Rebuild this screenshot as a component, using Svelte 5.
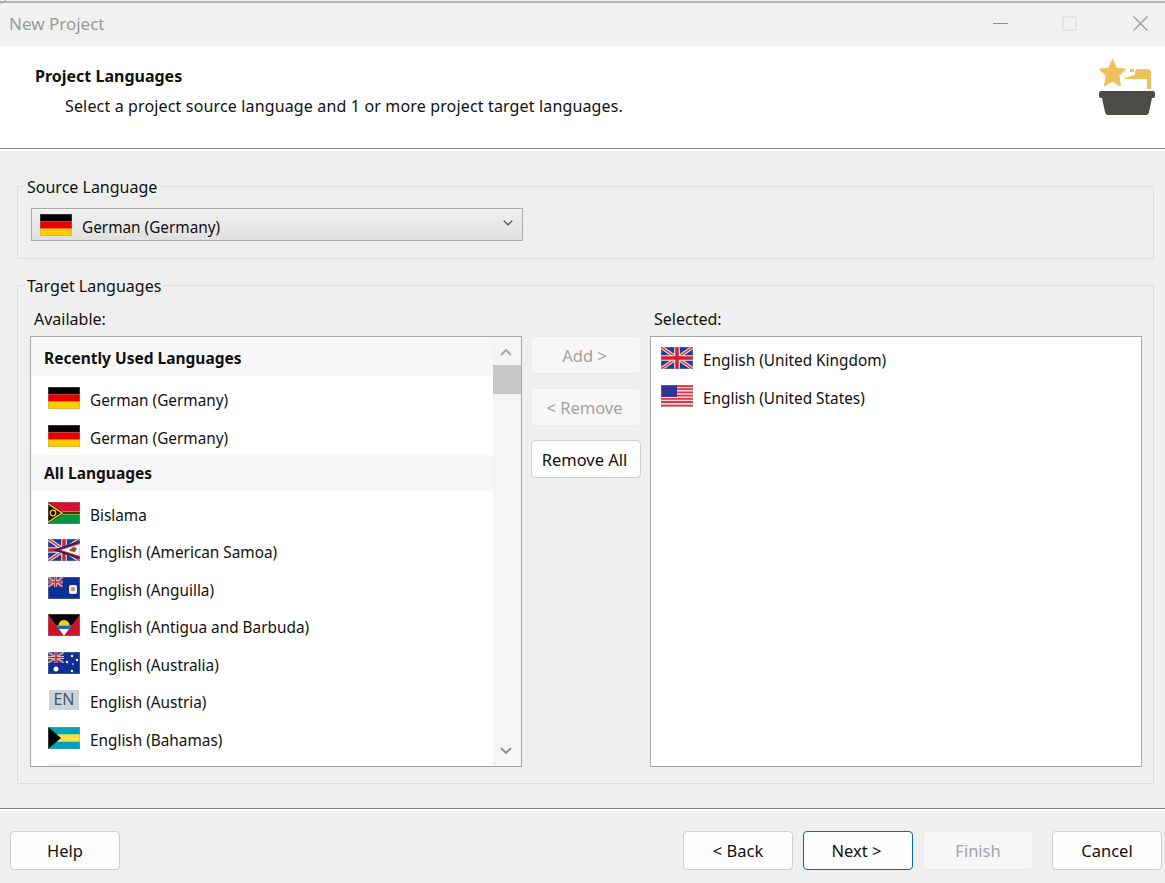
<script lang="ts">
    const recent = [
        { flag: 'de', name: 'German (Germany)' },
        { flag: 'de', name: 'German (Germany)' }
    ];
    const all = [
        { flag: 'vu', name: 'Bislama' },
        { flag: 'as', name: 'English (American Samoa)' },
        { flag: 'ai', name: 'English (Anguilla)' },
        { flag: 'ag', name: 'English (Antigua and Barbuda)' },
        { flag: 'au', name: 'English (Australia)' },
        { flag: 'en', name: 'English (Austria)' },
        { flag: 'bs', name: 'English (Bahamas)' },
        { flag: 'blank', name: '' }
    ];
    const selected = [
        { flag: 'gb', name: 'English (United Kingdom)' },
        { flag: 'us', name: 'English (United States)' }
    ];
</script>

{#snippet union(w: number, h: number)}
    <svg x="0" y="0" width={w} height={h} viewBox="0 0 32 22" preserveAspectRatio="none">
        <rect width="32" height="22" fill="#1c3f94" />
        <path d="M0 0 32 22M32 0 0 22" stroke="#f3d5d8" stroke-width="3.6" />
        <path d="M0 0 32 22M32 0 0 22" stroke="#cf3040" stroke-width="1.4" />
        <path d="M16 0V22M0 11H32" stroke="#f5e6e6" stroke-width="5.6" />
        <path d="M16 0V22M0 11H32" stroke="#d3202c" stroke-width="3.4" />
    </svg>
{/snippet}

{#snippet flagIcon(code: string)}
    {#if code === 'en'}
        <span class="flag en">EN</span>
    {:else}
        <svg class="flag" viewBox="0 0 32 22" width="32" height="22">
            {#if code === 'de'}
                <rect width="32" height="7.4" fill="#000" />
                <rect y="7.4" width="32" height="7.3" fill="#e60000" />
                <rect y="14.7" width="32" height="7.3" fill="#ffcc00" />
            {:else if code === 'vu'}
                <rect width="32" height="11" fill="#d21034" />
                <rect y="11" width="32" height="11" fill="#009543" />
                <path d="M10 11H32" stroke="#fdce12" stroke-width="3" />
                <path d="M10 11H32" stroke="#111" stroke-width="1.600" />
                <path d="M0 0 16 11 0 22Z" fill="#111" />
                <path d="M0 1.500 14 11 0 20.500" fill="none" stroke="#fdce12" stroke-width="1.500" />
                <circle cx="5" cy="11" r="2.800" fill="none" stroke="#fdce12" stroke-width="1.300" />
            {:else if code === 'as'}
                {@render union(32, 22)}
                <path d="M32 1.500 5 11 32 20.500Z" fill="#14266e" />
                <path d="M32 3.500 10 11 32 18.500Z" fill="#d3202c" />
                <path d="M32 5 13 11 32 17Z" fill="#fff" />
                <path d="M21 11 26 7.500 29 9.500 27 13 23 12.500Z" fill="#8a5a2b" />
            {:else if code === 'ai'}
                <rect width="32" height="22" fill="#0c2f96" />
                {@render union(15, 10)}
                <rect x="21" y="8" width="8" height="9" rx="2" fill="#eef0f4" />
                <circle cx="25" cy="12" r="2.200" fill="#e8915a" />
            {:else if code === 'ag'}
                <rect width="32" height="22" fill="#ce1126" />
                <path d="M0 0H32L16 22Z" fill="#000" />
                <path d="M8.400 11.500H23.600L16 22Z" fill="#fff" />
                <path d="M8.400 11.500H23.600L21 15H11Z" fill="#0f6fc6" />
                <path d="M10.500 11.500A5.500 5.500 0 0 1 21.500 11.500Z" fill="#fcd116" />
            {:else if code === 'au'}
                <rect width="32" height="22" fill="#0c2f96" />
                {@render union(16, 11)}
                <circle cx="8" cy="17" r="2.500" fill="#fff" />
                <circle cx="24" cy="4" r="1.200" fill="#fff" />
                <circle cx="19" cy="10" r="1.200" fill="#fff" />
                <circle cx="29" cy="8" r="1.200" fill="#fff" />
                <circle cx="25" cy="12" r=".8" fill="#fff" />
                <circle cx="24" cy="19" r="1.200" fill="#fff" />
            {:else if code === 'bs'}
                <rect width="32" height="22" fill="#00a3bd" />
                <rect y="7.300" width="32" height="7.400" fill="#fae042" />
                <path d="M0 0 13 11 0 22Z" fill="#000" />
            {:else if code === 'gb'}
                {@render union(32, 22)}
            {:else if code === 'us'}
                <rect width="32" height="22" fill="#fbe3e3" />
                <path d="M0 1H32M0 4.200H32M0 7.400H32M0 10.600H32M0 13.800H32M0 17H32M0 20.600H32" stroke="#e6303c" stroke-width="1.800" />
                <rect width="16" height="12" fill="#33339a" />
            {:else}
                <rect width="32" height="22" fill="#eeeeee" />
            {/if}
            {#if code !== 'blank'}
                <rect x=".5" y=".5" width="31" height="21" fill="none" stroke="#999" stroke-opacity=".35" />
            {/if}
        </svg>
    {/if}
{/snippet}

{#snippet langRow(item: { flag: string; name: string })}
    <div class="lang-row">
        {@render flagIcon(item.flag)}
        <span>{item.name}</span>
    </div>
{/snippet}

<div class="window">
    <svg class="corner" width="8" height="4" viewBox="0 0 8 4"><path d="M0 3Q4 3.200 6 0" fill="none" stroke="#9a9a9a" /></svg>
    <div class="titlebar">
        <span class="title">New Project</span>
        <div class="controls">
            <svg width="15" height="15" viewBox="0 0 15 15"><path d="M0 7.500H15" stroke="#8c8c8c" /></svg>
            <svg width="15" height="15" viewBox="0 0 15 15"><rect x=".8" y=".8" width="13.400" height="13.400" rx="1.500" fill="none" stroke="#e0e0e0" stroke-width="1.600" /></svg>
            <svg class="close" width="15" height="15" viewBox="0 0 15 15"><path d="M.5.5 14.500 14.500M14.500.5 .5 14.500" stroke="#999" stroke-width="1.200" /></svg>
        </div>
    </div>

    <header class="banner">
        <div>
            <h1>Project Languages</h1>
            <p>Select a project source language and 1 or more project target languages.</p>
        </div>
        <svg class="logo" width="58" height="58" viewBox="0 0 58 58">
            <path d="M14.500 1.500 18.300 10 27.500 11.300 20.800 17.800 22.500 28 14.500 23.200 6.500 28 8.200 17.800 1.500 11.300 10.700 10Z" fill="#efc15c" stroke="#efc15c" stroke-linejoin="round" />
            <path d="M26 20.500 37 16.500V14Q37 11 40 11H49Q53 11 53 15V31H49V21H26Z" fill="#efc15c" />
            <path d="M32 11H36V14H32Z" fill="#efc15c" />
            <path d="M3 33H55Q57 33 57 35V38Q57 40 55 40H54L51 54Q50.500 57 48 57H10Q7.500 57 7 54L4 40H3Q1 40 1 38V35Q1 33 3 33Z" fill="#4d4b48" />
        </svg>
    </header>

    <main class="content">
        <fieldset class="group source">
            <legend>Source Language</legend>
            <div class="combo">
                {@render flagIcon('de')}
                <span>German (Germany)</span>
                <svg class="chevron" width="10" height="6" viewBox="0 0 10 6"><path d="M.8.8 5 4.800 9.200.8" fill="none" stroke="#555" stroke-width="1.300" /></svg>
            </div>
        </fieldset>

        <fieldset class="group target">
            <legend>Target Languages</legend>
            <div class="columns">
                <div class="col-label">Available:</div>
                <div></div>
                <div class="col-label">Selected:</div>

                <div class="listbox available">
                    <div class="items">
                        <div class="list-head first">Recently Used Languages</div>
                        <div class="rows recent">
                            {#each recent as item}
                                {@render langRow(item)}
                            {/each}
                        </div>
                        <div class="list-head">All Languages</div>
                        <div class="rows">
                            {#each all as item}
                                {@render langRow(item)}
                            {/each}
                        </div>
                    </div>
                    <div class="scrollbar">
                        <svg width="12" height="8" viewBox="0 0 12 8"><path d="M1 7 6 2 11 7" fill="none" stroke="#a6a6a6" stroke-width="1.800" /></svg>
                        <div class="thumb"></div>
                        <div class="track"></div>
                        <svg width="12" height="8" viewBox="0 0 12 8"><path d="M1 1 6 6 11 1" fill="none" stroke="#8c8c8c" stroke-width="1.800" /></svg>
                    </div>
                </div>

                <div class="move-buttons">
                    <button disabled>Add &gt;</button>
                    <button disabled>&lt; Remove</button>
                    <button>Remove All</button>
                </div>

                <div class="listbox chosen">
                    {#each selected as item}
                        {@render langRow(item)}
                    {/each}
                </div>
            </div>
        </fieldset>
    </main>

    <footer class="footer">
        <button>Help</button>
        <div class="nav">
            <button>&lt; Back</button>
            <button class="primary">Next &gt;</button>
            <button disabled>Finish</button>
            <button class="cancel">Cancel</button>
        </div>
    </footer>
</div>

<style>
    :global(body) {
        margin: 0;
        background: #efefef;
    }

    .window {
        position: relative;
        width: 1165px;
        height: 883px;
        display: flex;
        flex-direction: column;
        overflow: hidden;
        font-family: "Noto Sans", "Open Sans", sans-serif;
        font-size: 15.5px;
        color: #111;
        background: #efefef;
    }

    .corner {
        position: absolute;
        top: 0;
        left: 0;
    }

    .titlebar {
        height: 43px;
        flex: none;
        margin-top: 1px;
        border-top: 2px solid #b4b4b4;
        background: #f1f1f1;
        display: flex;
        align-items: center;
        justify-content: space-between;
    }

    .title {
        margin: -2px 0 0 9px;
        font-size: 17px;
        color: #999;
    }

    .controls {
        display: flex;
        gap: 54px;
        margin: -2px 17px 0 0;
    }

    .close {
        margin-left: 2px;
    }

    .banner {
        height: 102px;
        flex: none;
        background: #fff;
        border-bottom: 1px solid #808080;
        box-shadow: 0 2px 0 #fff;
        display: flex;
        justify-content: space-between;
        box-sizing: content-box;
    }

    .banner h1 {
        margin: 19px 0 0 35px;
        font-size: 16px;
        line-height: 22px;
        font-weight: 700;
    }

    .banner p {
        margin: 8px 0 0 65px;
        font-size: 16px;
        letter-spacing: .15px;
        line-height: 22px;
    }

    .logo {
        margin: 12px 9px 0 0;
    }

    .content {
        height: 659px;
        flex: none;
        box-sizing: border-box;
        padding: 25px 0 0 17px;
    }

    .group {
        width: 1137px;
        box-sizing: border-box;
        margin: 0;
        padding: 0 11px 0 12px;
        border: 1px solid #dcdcdc;
    }

    .group legend {
        margin-left: -5px;
        padding: 2px 2px 0;
        line-height: 22px;
        font-size: 16px;
    }

    .source {
        height: 85px;
    }

    .target {
        height: 511px;
        margin-top: 14px;
    }

    .combo {
        width: 492px;
        height: 33px;
        box-sizing: border-box;
        margin: 10px 0 0 1px;
        padding: 4px 9px 0 8px;
        display: flex;
        align-items: center;
        gap: 10px;
        font-size: 15.350px;
        border: 1px solid #a9a9a9;
        background: linear-gradient(#f1f1f1, #e0e0e0);
    }

    .combo :global(.flag) {
        margin-top: -4px;
    }

    .chevron {
        margin-left: auto;
        margin-top: -7px;
    }

    .columns {
        margin-top: 11px;
        display: grid;
        grid-template-columns: 492px 110px 492px;
        grid-template-rows: 28px 431px;
        column-gap: 9px;
    }

    .col-label {
        padding-left: 4px;
        line-height: 22px;
        font-size: 16px;
    }

    .listbox {
        box-sizing: border-box;
        border: 1px solid #a6a6a6;
        background: #fff;
        overflow: hidden;
    }

    .available {
        display: flex;
    }

    .items {
        flex: 1;
        min-width: 0;
    }

    .list-head {
        height: 36px;
        padding-left: 13px;
        display: flex;
        align-items: center;
        background: #f7f7f7;
        font-weight: 700;
    }

    .list-head.first {
        height: 39px;
        padding-top: 3px;
        box-sizing: border-box;
    }

    .rows {
        padding: 5px 0 0 17px;
        margin-bottom: -1px;
    }

    .rows.recent {
        margin-bottom: -2px;
    }

    .rows.recent .lang-row,
    .chosen .lang-row {
        height: 38px;
    }

    .lang-row {
        height: 37.500px;
        display: flex;
        align-items: center;
        gap: 10px;
        font-size: 15.350px;
        white-space: nowrap;
    }

    .lang-row :global(.flag) {
        margin-top: -4px;
    }

    .flag {
        flex: none;
        display: block;
    }

    .en {
        width: 30px;
        height: 20px;
        margin-left: 1px;
        margin-right: 1px;
        background: #ced3da;
        color: #4a5578;
        font-size: 16px;
        line-height: 19px;
        text-align: center;
    }

    .scrollbar {
        width: 28px;
        flex: none;
        display: flex;
        flex-direction: column;
        align-items: center;
        background: #f5f5f5;
    }

    .scrollbar svg {
        flex: none;
        margin: 11px 0 9px -2px;
    }

    .scrollbar svg:last-child {
        margin: 7px 0 11px -2px;
    }

    .thumb {
        width: 100%;
        height: 29px;
        flex: none;
        background: #c8c8c8;
    }

    .track {
        flex: 1;
    }

    .move-buttons {
        display: flex;
        flex-direction: column;
        gap: 14px;
    }

    .move-buttons button {
        padding-right: 3px;
    }

    .chosen {
        padding: 4px 0 0 10px;
    }

    button {
        width: 110px;
        height: 38px;
        padding: 0;
        box-sizing: border-box;
        border: 1px solid #cfcfcf;
        border-radius: 4px;
        background: #fdfdfd;
        color: #111;
        font: inherit;
        font-size: 16.500px;
    }

    button:disabled {
        background: #f7f7f7;
        border-color: #ececec;
        color: #a3a3a3;
    }

    .footer {
        flex: 1;
        border-top: 1px solid #808080;
        box-shadow: inset 0 2px 0 #fff;
        padding: 22px 3px 0 10px;
        display: flex;
        justify-content: space-between;
    }

    .footer button {
        height: 39px;
    }

    .nav {
        display: flex;
        gap: 10px;
    }

    .nav .primary {
        border-color: #0067c0;
        padding-right: 3px;
    }

    .nav .cancel {
        margin-left: 9px;
    }
</style>
